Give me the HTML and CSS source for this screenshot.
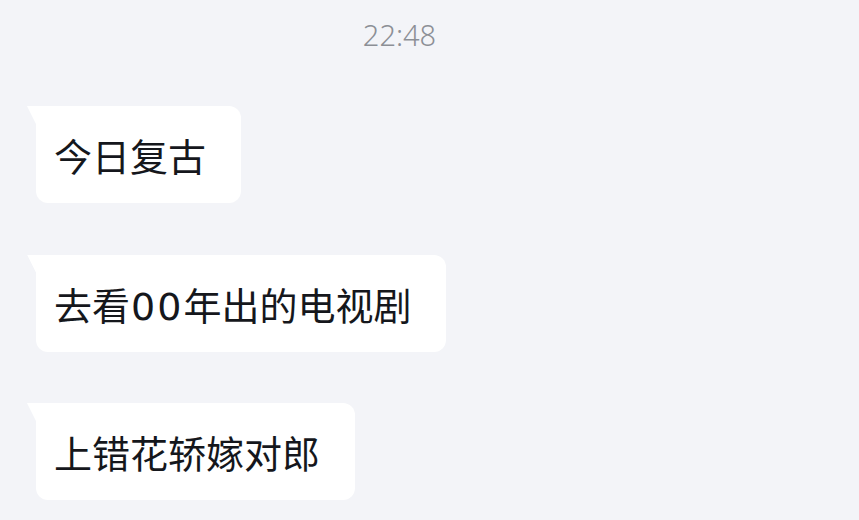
FILE: index.html
```html
<!DOCTYPE html>
<html lang="zh">
<head>
    <meta charset="UTF-8">
    <meta name="viewport" content="width=device-width, initial-scale=1.0">
    <title>聊天</title>
    <link rel="stylesheet" href="styles.css">
</head>
<body>
    <div class="chat">
        <div class="time">22:48</div>
        <div class="msg-list">
            <div class="bubble">今日复古</div>
            <div class="bubble">去看<span class="num">00</span>年出的电视剧</div>
            <div class="bubble">上错花轿嫁对郎</div>
        </div>
    </div>
</body>
</html>
```

FILE: styles.css
```css
body {
    margin: 0;
    padding: 0;
    background-color: #f3f4f8;
    font-family: "Noto Sans CJK SC", "Noto Sans", sans-serif;
    color: #15171c;
}
.chat {
    display: flex;
    flex-direction: column;
    height: 520px;
    overflow: hidden;
}
.time {
    align-self: center;
    margin-right: 60px;
    font-family: "Noto Sans", "Noto Sans CJK SC", sans-serif;
    font-size: 29px;
    font-weight: 300;
    color: #8c8f96;
    line-height: 32px;
    padding-top: 19px;
}
.msg-list {
    display: flex;
    flex-direction: column;
    align-items: flex-start;
    gap: 51.5px;
    padding-top: 55px;
    padding-left: 36px;
}
.bubble {
    position: relative;
    background-color: #fff;
    font-size: 38px;
    line-height: 97px;
    height: 97px;
    padding: 0 35px 0 18px;
    border-radius: 0 12px 12px 12px;
    white-space: nowrap;
}
.bubble::before {
    content: "";
    position: absolute;
    left: -9px;
    top: 0;
    width: 10px;
    height: 20px;
    background-color: #fff;
    clip-path: polygon(0 0, 100% 0, 100% 100%);
}
.num {
    font-family: "DejaVu Sans", sans-serif;
    letter-spacing: 2px;
    padding-left: 1px;
}
```
